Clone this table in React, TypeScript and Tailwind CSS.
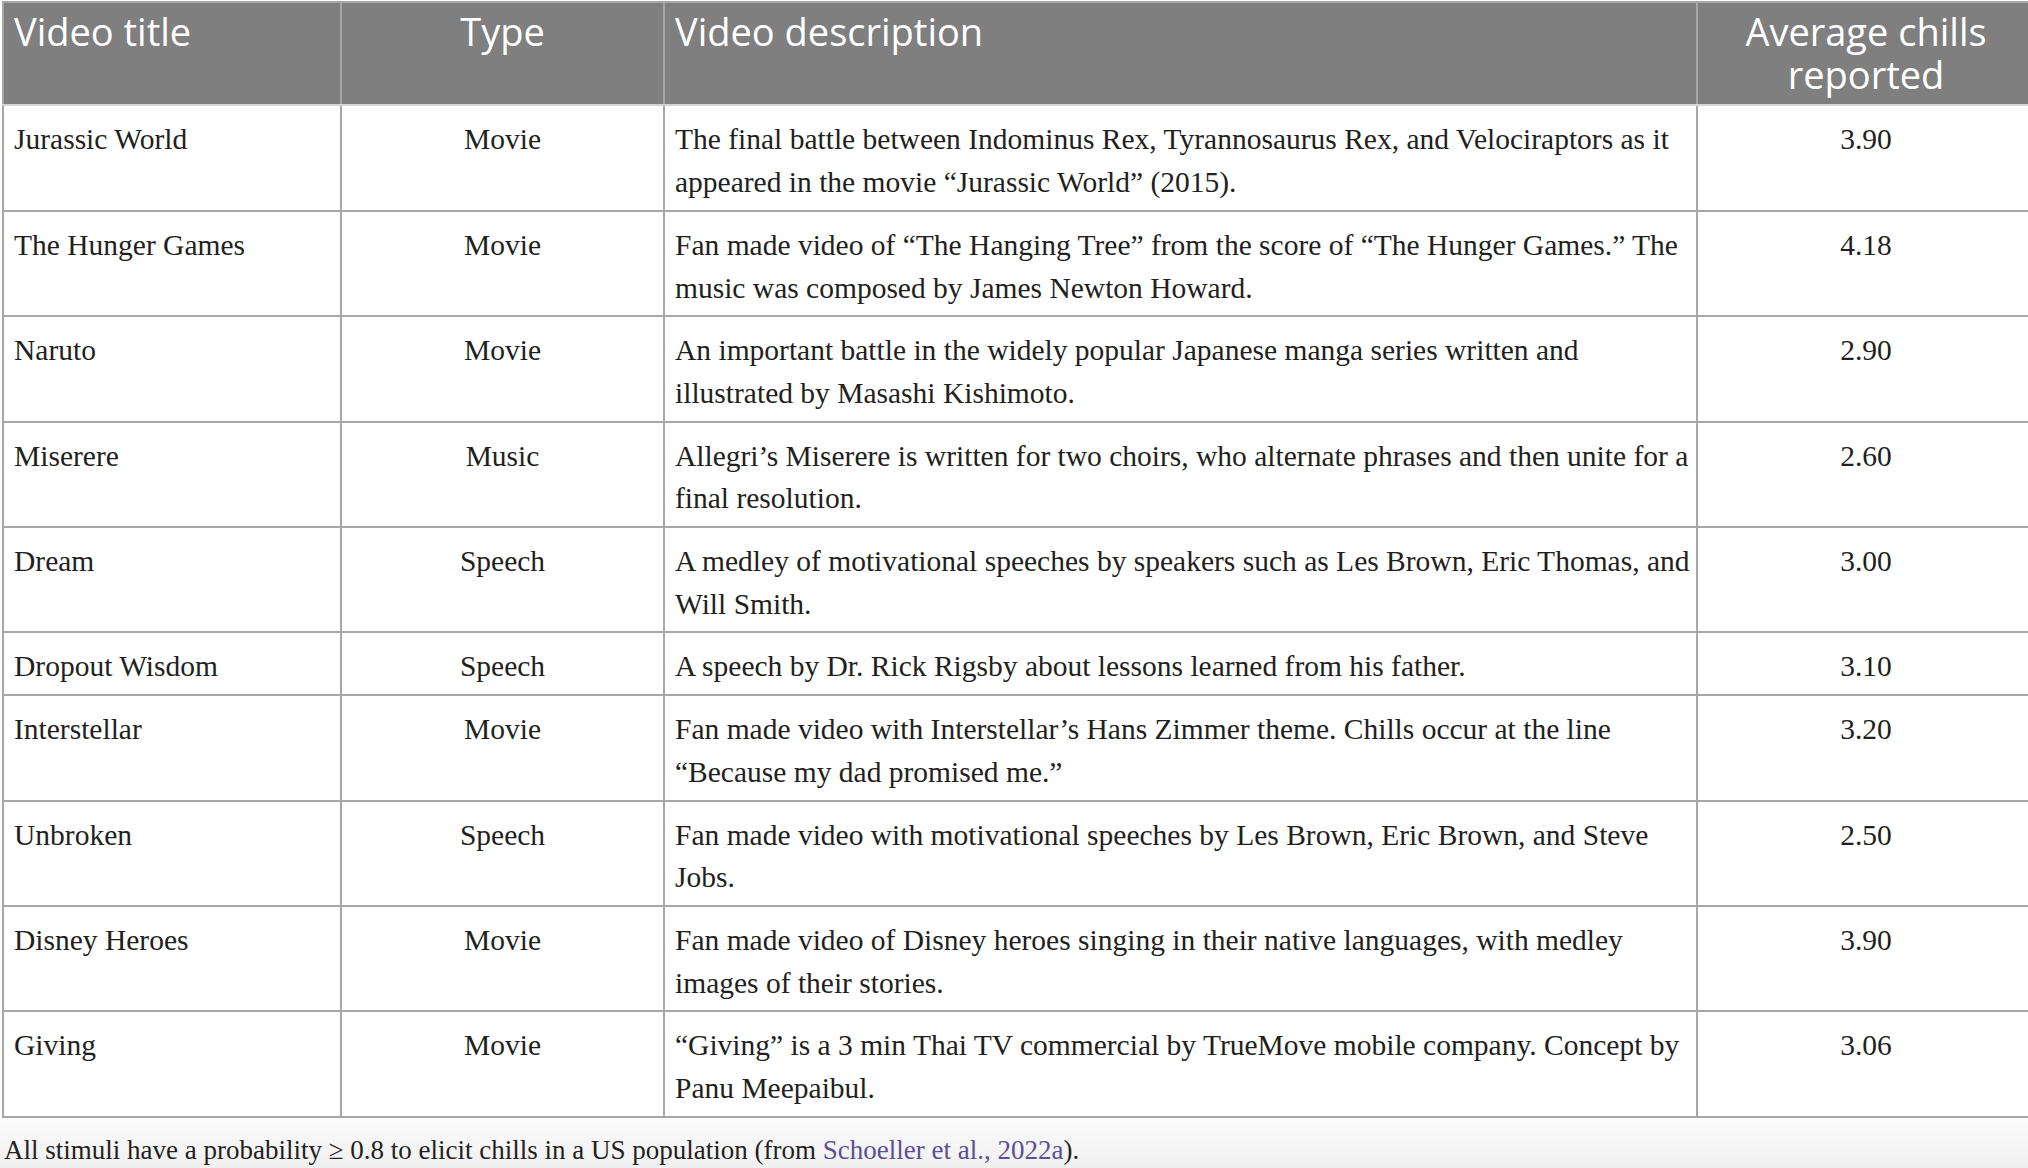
import React from "react"

interface Stimulus {
  title: string
  type: string
  description: string[]
  chills: string
}

const stimuli: Stimulus[] = [
  {
    title: "Jurassic World",
    type: "Movie",
    description: [
      "The final battle between Indominus Rex, Tyrannosaurus Rex, and Velociraptors as it",
      "appeared in the movie \u201cJurassic World\u201d (2015).",
    ],
    chills: "3.90",
  },
  {
    title: "The Hunger Games",
    type: "Movie",
    description: [
      "Fan made video of \u201cThe Hanging Tree\u201d from the score of \u201cThe Hunger Games.\u201d The",
      "music was composed by James Newton Howard.",
    ],
    chills: "4.18",
  },
  {
    title: "Naruto",
    type: "Movie",
    description: [
      "An important battle in the widely popular Japanese manga series written and",
      "illustrated by Masashi Kishimoto.",
    ],
    chills: "2.90",
  },
  {
    title: "Miserere",
    type: "Music",
    description: [
      "Allegri\u2019s Miserere is written for two choirs, who alternate phrases and then unite for a",
      "final resolution.",
    ],
    chills: "2.60",
  },
  {
    title: "Dream",
    type: "Speech",
    description: [
      "A medley of motivational speeches by speakers such as Les Brown, Eric Thomas, and",
      "Will Smith.",
    ],
    chills: "3.00",
  },
  {
    title: "Dropout Wisdom",
    type: "Speech",
    description: ["A speech by Dr. Rick Rigsby about lessons learned from his father."],
    chills: "3.10",
  },
  {
    title: "Interstellar",
    type: "Movie",
    description: [
      "Fan made video with Interstellar\u2019s Hans Zimmer theme. Chills occur at the line",
      "\u201cBecause my dad promised me.\u201d",
    ],
    chills: "3.20",
  },
  {
    title: "Unbroken",
    type: "Speech",
    description: [
      "Fan made video with motivational speeches by Les Brown, Eric Brown, and Steve",
      "Jobs.",
    ],
    chills: "2.50",
  },
  {
    title: "Disney Heroes",
    type: "Movie",
    description: [
      "Fan made video of Disney heroes singing in their native languages, with medley",
      "images of their stories.",
    ],
    chills: "3.90",
  },
  {
    title: "Giving",
    type: "Movie",
    description: [
      "\u201cGiving\u201d is a 3 min Thai TV commercial by TrueMove mobile company. Concept by",
      "Panu Meepaibul.",
    ],
    chills: "3.06",
  },
]

export default function App() {
  return (
    <div className="w-[2028px] h-[1168px] overflow-hidden bg-white">
      {/* Table */}
      <div className="pl-[2px] pt-[1px]">
        <table className="w-[2032px] table-fixed border-collapse border-2 border-[#a7a7a7]">
          <colgroup>
            <col className="w-[338px]" />
            <col className="w-[323px]" />
            <col className="w-[1033px]" />
            <col className="w-[338px]" />
          </colgroup>
          <thead>
            <tr className="bg-[#7f7f7f] text-white font-['Open_Sans',sans-serif] text-[38px] leading-[42.7px]">
              <th className="border-2 border-[#a7a7a7] border-b-[#d4d4d4] pt-[7px] pb-[9px] px-[10px] text-left font-normal align-top">
                Video title
              </th>
              <th className="border-2 border-[#a7a7a7] border-b-[#d4d4d4] pt-[7px] pb-[9px] px-[10px] text-center font-normal align-top">
                Type
              </th>
              <th className="border-2 border-[#a7a7a7] border-b-[#d4d4d4] pt-[7px] pb-[9px] px-[10px] text-left font-normal align-top">
                Video description
              </th>
              <th className="border-2 border-[#a7a7a7] border-b-[#d4d4d4] pt-[7px] pb-[9px] px-[10px] text-center font-normal align-top">
                Average chills reported
              </th>
            </tr>
          </thead>
          <tbody className="font-['Liberation_Serif',serif] text-[29.5px] leading-[42.7px] text-[#231f20]">
            {stimuli.map((s) => (
              <tr key={s.title}>
                <td className="border-2 border-[#a7a7a7] pt-[12px] pb-[6px] px-[10px] align-top">{s.title}</td>
                <td className="border-2 border-[#a7a7a7] pt-[12px] pb-[6px] px-[10px] align-top text-center">
                  {s.type}
                </td>
                <td className="border-2 border-[#a7a7a7] pt-[12px] pb-[6px] px-[10px] align-top whitespace-nowrap">
                  {s.description.map((line, i) => (
                    <div key={i}>{line}</div>
                  ))}
                </td>
                <td className="border-2 border-[#a7a7a7] pt-[12px] pb-[6px] px-[10px] align-top text-center">
                  {s.chills}
                </td>
              </tr>
            ))}
          </tbody>
        </table>
      </div>

      {/* Footnote */}
      <div className="h-[60px] bg-gradient-to-b from-[#fbfbfb] to-[#eeeeee] px-[4px] pt-[14px] font-['Liberation_Serif',serif] text-[27px] leading-[36px] text-[#231f20] whitespace-nowrap">
        All stimuli have a probability {"\u2265"} 0.8 to elicit chills in a US population (from{" "}
        <span className="text-[#5b4f96]">Schoeller et al., 2022a</span>).
      </div>
    </div>
  )
}
